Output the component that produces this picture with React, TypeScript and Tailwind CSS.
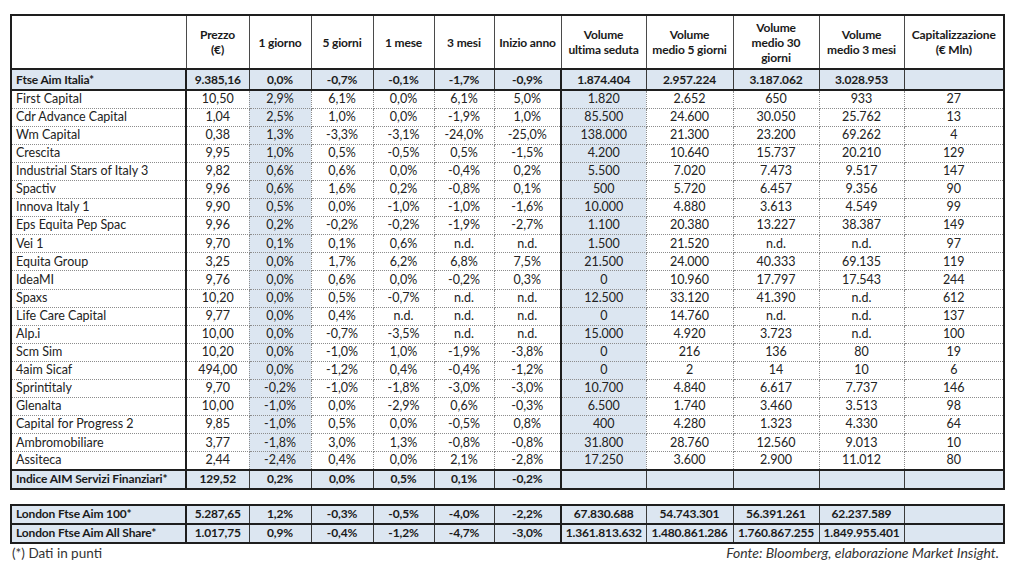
const COLS = [175, 63, 62, 62, 61, 60, 67, 85, 87, 86, 85, 100];

type Row = { name: string; v: string[] };

const HEAD = [
  '',
  'Prezzo\n(€)',
  '1 giorno',
  '5 giorni',
  '1 mese',
  '3 mesi',
  'Inizio anno',
  'Volume\nultima seduta',
  'Volume\nmedio 5 giorni',
  'Volume\nmedio 30\ngiorni',
  'Volume\nmedio 3 mesi',
  'Capitalizzazione\n(€ Mln)',
];

const INDEX_ROW: Row = {
  name: 'Ftse Aim Italia*',
  v: ['9.385,16', '0,0%', '-0,7%', '-0,1%', '-1,7%', '-0,9%', '1.874.404', '2.957.224', '3.187.062', '3.028.953', ''],
};

const ROWS: Row[] = [
  { name: 'First Capital', v: ['10,50', '2,9%', '6,1%', '0,0%', '6,1%', '5,0%', '1.820', '2.652', '650', '933', '27'] },
  { name: 'Cdr Advance Capital', v: ['1,04', '2,5%', '1,0%', '0,0%', '-1,9%', '1,0%', '85.500', '24.600', '30.050', '25.762', '13'] },
  { name: 'Wm Capital', v: ['0,38', '1,3%', '-3,3%', '-3,1%', '-24,0%', '-25,0%', '138.000', '21.300', '23.200', '69.262', '4'] },
  { name: 'Crescita', v: ['9,95', '1,0%', '0,5%', '-0,5%', '0,5%', '-1,5%', '4.200', '10.640', '15.737', '20.210', '129'] },
  { name: 'Industrial Stars of Italy 3', v: ['9,82', '0,6%', '0,6%', '0,0%', '-0,4%', '0,2%', '5.500', '7.020', '7.473', '9.517', '147'] },
  { name: 'Spactiv', v: ['9,96', '0,6%', '1,6%', '0,2%', '-0,8%', '0,1%', '500', '5.720', '6.457', '9.356', '90'] },
  { name: 'Innova Italy 1', v: ['9,90', '0,5%', '0,0%', '-1,0%', '-1,0%', '-1,6%', '10.000', '4.880', '3.613', '4.549', '99'] },
  { name: 'Eps Equita Pep Spac', v: ['9,96', '0,2%', '-0,2%', '-0,2%', '-1,9%', '-2,7%', '1.100', '20.380', '13.227', '38.387', '149'] },
  { name: 'Vei 1', v: ['9,70', '0,1%', '0,1%', '0,6%', 'n.d.', 'n.d.', '1.500', '21.520', 'n.d.', 'n.d.', '97'] },
  { name: 'Equita Group', v: ['3,25', '0,0%', '1,7%', '6,2%', '6,8%', '7,5%', '21.500', '24.000', '40.333', '69.135', '119'] },
  { name: 'IdeaMI', v: ['9,76', '0,0%', '0,6%', '0,0%', '-0,2%', '0,3%', '0', '10.960', '17.797', '17.543', '244'] },
  { name: 'Spaxs', v: ['10,20', '0,0%', '0,5%', '-0,7%', 'n.d.', 'n.d.', '12.500', '33.120', '41.390', 'n.d.', '612'] },
  { name: 'Life Care Capital', v: ['9,77', '0,0%', '0,4%', 'n.d.', 'n.d.', 'n.d.', '0', '14.760', 'n.d.', 'n.d.', '137'] },
  { name: 'Alp.i', v: ['10,00', '0,0%', '-0,7%', '-3,5%', 'n.d.', 'n.d.', '15.000', '4.920', '3.723', 'n.d.', '100'] },
  { name: 'Scm Sim', v: ['10,20', '0,0%', '-1,0%', '1,0%', '-1,9%', '-3,8%', '0', '216', '136', '80', '19'] },
  { name: '4aim Sicaf', v: ['494,00', '0,0%', '-1,2%', '0,4%', '-0,4%', '-1,2%', '0', '2', '14', '10', '6'] },
  { name: 'Sprintitaly', v: ['9,70', '-0,2%', '-1,0%', '-1,8%', '-3,0%', '-3,0%', '10.700', '4.840', '6.617', '7.737', '146'] },
  { name: 'Glenalta', v: ['10,00', '-1,0%', '0,0%', '-2,9%', '0,6%', '-0,3%', '6.500', '1.740', '3.460', '3.513', '98'] },
  { name: 'Capital for Progress 2', v: ['9,85', '-1,0%', '0,5%', '0,0%', '-0,5%', '0,8%', '400', '4.280', '1.323', '4.330', '64'] },
  { name: 'Ambromobiliare', v: ['3,77', '-1,8%', '3,0%', '1,3%', '-0,8%', '-0,8%', '31.800', '28.760', '12.560', '9.013', '10'] },
  { name: 'Assiteca', v: ['2,44', '-2,4%', '0,4%', '0,0%', '2,1%', '-2,8%', '17.250', '3.600', '2.900', '11.012', '80'] },
];

const SECTOR_ROW: Row = {
  name: 'Indice AIM Servizi Finanziari*',
  v: ['129,52', '0,2%', '0,0%', '0,5%', '0,1%', '-0,2%', '', '', '', '', ''],
};

const LONDON: Row[] = [
  { name: 'London Ftse Aim 100*', v: ['5.287,65', '1,2%', '-0,3%', '-0,5%', '-4,0%', '-2,2%', '67.830.688', '54.743.301', '56.391.261', '62.237.589', ''] },
  { name: 'London Ftse Aim All Share*', v: ['1.017,75', '0,9%', '-0,4%', '-1,2%', '-4,7%', '-3,0%', '1.361.813.632', '1.480.861.286', '1.760.867.255', '1.849.955.401', ''] },
];

function Cols() {
  return (
    <colgroup>
      {COLS.map((w, i) => (
        <col key={i} style={{ width: w }} />
      ))}
    </colgroup>
  );
}

// bold light-blue row with solid separators (index rows)
function BoldRow({ row, h }: { row: Row; h: string }) {
  const edge = 'border border-solid border-[#3a3a3a] border-t-2 border-t-[#1e1e1e] border-b-2 border-b-[#1e1e1e]';
  return (
    <tr className={`${h} bg-[#dce6f1] font-bold text-[12px] tracking-[-0.15px] text-[#1a1a1a]`}>
      <td className={`px-[4px] text-left whitespace-nowrap ${edge} border-r-2 border-r-[#1e1e1e]`}>{row.name}</td>
      {row.v.map((c, i) => (
        <td key={i} className={`text-center whitespace-nowrap ${edge} ${i === 5 ? 'border-r-2 border-r-[#1e1e1e]' : ''}`}>
          {c}
        </td>
      ))}
    </tr>
  );
}

export default function App() {
  return (
    <div className="w-[1024px] h-[563px] overflow-hidden bg-white pl-[10px] pt-[14px] font-['Lato','Open_Sans',sans-serif] text-[12.5px] leading-none text-[#222]">
      <table className="table-fixed border-collapse w-[993px] border-2 border-solid border-[#1e1e1e]">
        <Cols />
        <thead>
          <tr className="h-[54px] font-bold text-[12px] tracking-[-0.15px] text-[#1a1a1a]">
            {HEAD.map((t, i) => (
              <th
                key={i}
                className="text-center align-middle whitespace-pre-line leading-[15px] font-bold border border-solid border-[#4a4a4a] border-b-2 border-b-[#1e1e1e]"
              >
                {t}
              </th>
            ))}
          </tr>
        </thead>
        <tbody>
          <BoldRow row={INDEX_ROW} h="h-[21px]" />
          {ROWS.map((r) => (
            <tr key={r.name} className="h-[18.1px]">
              <td className="px-[4px] text-left whitespace-nowrap border border-dotted border-[#8c8c8c] border-r-2 [border-right-style:solid] border-r-[#1e1e1e]">
                {r.name}
              </td>
              {r.v.map((c, i) => (
                <td
                  key={i}
                  className={`text-center whitespace-nowrap border border-dotted border-[#8c8c8c] ${
                    i === 1 || i === 6 ? 'bg-[#dce6f1]' : ''
                  } ${i === 5 ? 'border-r-2 [border-right-style:solid] border-r-[#1e1e1e]' : ''}`}
                >
                  {c}
                </td>
              ))}
            </tr>
          ))}
          <BoldRow row={SECTOR_ROW} h="h-[19px]" />
        </tbody>
      </table>

      <table className="mt-[14px] table-fixed border-collapse w-[993px] border-2 border-solid border-[#1e1e1e]">
        <Cols />
        <tbody>
          {LONDON.map((r) => (
            <BoldRow key={r.name} row={r} h="h-[19px]" />
          ))}
        </tbody>
      </table>

      <div className="w-[993px] flex justify-between items-center pt-[1px] leading-[16px] text-[#333]">
        <span className="pl-[2px] text-[13.5px]">(*) Dati in punti</span>
        <span className="italic pr-[4px] text-[14px]">Fonte: Bloomberg, elaborazione Market Insight.</span>
      </div>
    </div>
  );
}
